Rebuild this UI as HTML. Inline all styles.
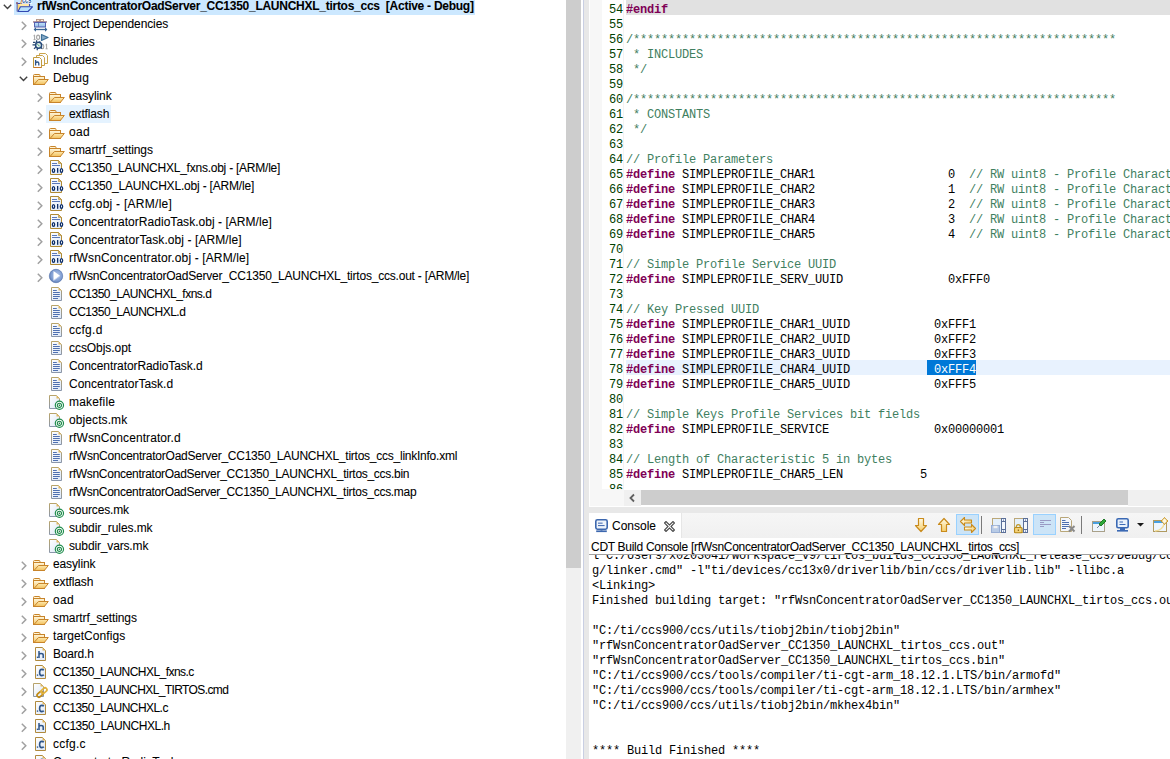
<!DOCTYPE html>
<html><head><meta charset="utf-8"><style>
*{margin:0;padding:0;box-sizing:border-box}
html,body{width:1170px;height:759px;overflow:hidden;background:#fff;position:relative}
body{font-family:"Liberation Sans",sans-serif;}
.abs{position:absolute}
#tree{position:absolute;left:0;top:0;width:566px;height:759px;overflow:hidden;background:#fff}
.row{position:absolute;height:18px;line-height:18px;font-size:12px;color:#000;white-space:pre;-webkit-text-stroke:0.07px #000}
.row .t{position:absolute;top:0}
.hl{position:absolute;height:18px}
.chev{position:absolute}
.ico{position:absolute}
.kw{color:#7f0055;font-weight:bold}
.cm{color:#3f7f5f}
.ln{position:absolute;left:0;width:33px;text-align:right;color:#004000;height:15px;line-height:15px}
.code{position:absolute;left:36px;height:15px;line-height:15px;color:#000}
.con{position:absolute;left:2px;height:15px;line-height:15px;color:#000}
.mono{font-family:"Liberation Mono",monospace;font-size:12px;letter-spacing:-0.2px;white-space:pre}
</style></head>
<body>
<div id="tree"><svg width="0" height="0" style="position:absolute">
<defs>
<linearGradient id="gfold" x1="0" y1="0" x2="0" y2="1"><stop offset="0" stop-color="#fff8e0"/><stop offset="1" stop-color="#f4c460"/></linearGradient>
<linearGradient id="gflap" x1="0" y1="0" x2="0" y2="1"><stop offset="0" stop-color="#feeab0"/><stop offset="1" stop-color="#f2c05c"/></linearGradient>
<linearGradient id="gpage" x1="0" y1="0" x2="1" y2="1"><stop offset="0" stop-color="#ffffff"/><stop offset="1" stop-color="#dce7f6"/></linearGradient>
<linearGradient id="gbord" x1="0" y1="0" x2="0" y2="1"><stop offset="0" stop-color="#b9a46a"/><stop offset="1" stop-color="#8a96aa"/></linearGradient>
<radialGradient id="gout" cx="0.55" cy="0.45" r="0.6"><stop offset="0" stop-color="#b6c9ec"/><stop offset="0.7" stop-color="#7d9bd0"/><stop offset="1" stop-color="#5472aa"/></radialGradient>
<linearGradient id="gbox" x1="0" y1="0" x2="0" y2="1"><stop offset="0" stop-color="#c4e4fb"/><stop offset="1" stop-color="#8fb8e6"/></linearGradient>
</defs>
<symbol id="i-folder" viewBox="0 0 20 20">
 <path d="M2.5,9 L2.5,7.5 Q2.5,6.5 3.5,6.5 L8,6.5 Q9,6.5 9,7.5 L9,8.5" fill="#fff4d4" stroke="#c8842a" stroke-width="1"/>
 <rect x="2.5" y="8.5" width="11" height="8" fill="url(#gfold)" stroke="#c8842a" stroke-width="1"/>
 <path d="M7.5,11.5 L17.3,11.5 L13.3,16.5 L3,16.5 Z" fill="url(#gflap)" stroke="#c8842a" stroke-width="1" stroke-linejoin="round"/>
</symbol>
<symbol id="i-root" viewBox="0 0 20 20">
 <path d="M2.2,15.5 L2.2,7.5 L14.5,7.5 L14.5,10.5" fill="#ffe9a6" stroke="#3f4cae" stroke-width="1.1"/>
 <path d="M2.8,8 L2.8,15 L6,11 Z" fill="#fcd670"/>
 <path d="M1,7 L3,7" stroke="#8a5a70" stroke-width="1.3"/>
 <path d="M5.5,10.8 L17.5,10.8 L13,15.5 L3,15.5 Z" fill="#b8e0fb" stroke="#3148b2" stroke-width="1.1" stroke-linejoin="round"/>
 <rect x="6.6" y="0" width="10.2" height="7.8" fill="#fff"/>
 <path d="M5.5,8 L7.3,2" stroke="#e0a040" stroke-width="1"/>
 <text x="7" y="6.9" font-family="Liberation Sans" font-size="8.5" font-weight="bold" fill="#1f5d9c" textLength="9.3" lengthAdjust="spacingAndGlyphs">ccs</text>
</symbol>
<symbol id="i-deps" viewBox="0 0 20 20">
 <rect x="5.5" y="5.5" width="3" height="2" fill="#fde4c8" stroke="#b49484" stroke-width="0.9"/>
 <rect x="9.5" y="5.5" width="3" height="2" fill="#fff0dc" stroke="#b49484" stroke-width="0.9"/>
 <rect x="2" y="7.2" width="14" height="1.5" fill="#a08290"/>
 <rect x="3.5" y="8.5" width="11" height="4.5" fill="url(#gbox)" stroke="#5560b0" stroke-width="1"/>
 <line x1="7.5" y1="9" x2="7.5" y2="13" stroke="#6070b0" stroke-width="0.8"/>
 <line x1="3.5" y1="15.5" x2="15.5" y2="15.5" stroke="#3a6494" stroke-width="1.3"/>
 <path d="M2.6,15.5 L5,13.3 L5,17.7 Z M16.4,15.5 L14,13.3 L14,17.7 Z" fill="#3a6494"/>
</symbol>
<symbol id="i-bins" viewBox="0 0 20 20">
 <path d="M2.5,3.8 L3.6,3 L3.6,7.6 M2.6,7.6 L4.6,7.6" fill="none" stroke="#a4a4a4" stroke-width="1"/>
 <ellipse cx="7.1" cy="5.3" rx="1.5" ry="2.2" fill="none" stroke="#a4a4a4" stroke-width="1.1"/>
 <path d="M10.5,2.5 L17,5.5 L10.5,8.5 Z" fill="#86aac8" stroke="#3d7098" stroke-width="1.2" stroke-linejoin="round"/>
 <ellipse cx="11.4" cy="14.5" rx="1.4" ry="2.2" fill="none" stroke="#a4a4a4" stroke-width="1.1"/>
 <path d="M14.6,12.8 L15.6,12 L15.6,16.8 M14.6,16.8 L16.6,16.8" fill="none" stroke="#a4a4a4" stroke-width="1"/>
 <path d="M4.6,10.3 L2,10.3 M5.6,8.3 L5.6,10.3 M9.3,9.5 L8.3,10.5 M4.5,12.8 L1.5,12.8 M4.8,15.3 L3,16.8 M6.8,16 L6,18.2 M10,15.5 L11,16.5" stroke="#27496f" stroke-width="1.2"/>
 <circle cx="7.6" cy="13.2" r="3" fill="#e2f0ea" stroke="#24487a" stroke-width="1.5"/>
 <path d="M6.5,12.2 L8.6,14.3" stroke="#3a9a70" stroke-width="1"/>
</symbol>
<symbol id="i-incs" viewBox="0 0 20 20">
 <path d="M8.5,3.5 L14.5,3.5 L16.5,5.5 L16.5,13.5 L8.5,13.5 Z" fill="#fbfcff" stroke="#cba54c" stroke-width="1"/>
 <path d="M5.5,5.5 L11.5,5.5 L13.5,7.5 L13.5,15.5 L5.5,15.5 Z" fill="#fbfcff" stroke="#c9a24a" stroke-width="1"/>
 <path d="M2.5,7.5 L8.5,7.5 L10.5,9.5 L10.5,17.5 L2.5,17.5 Z" fill="#fbfcff" stroke="#c19a3e" stroke-width="1"/>
 <path d="M2.5,17.5 L10.5,17.5" stroke="#c8782a" stroke-width="1"/>
 <path d="M4.6,10 L4.6,15.5 M4.6,12.8 Q5.2,12 6.4,12 Q7.8,12 7.8,13.3 L7.8,15.5" fill="none" stroke="#2d5488" stroke-width="1.3"/>
</symbol>
<symbol id="i-obj" viewBox="0 0 20 20">
 <path d="M3.5,2.5 L11.5,2.5 L14.5,5.5 L14.5,16.5 L3.5,16.5 Z" fill="url(#gpage)" stroke="#b08a34" stroke-width="1"/>
 <path d="M11.5,2.5 L11.5,5.5 L14.5,5.5 Z" fill="#e2bb62" stroke="#b08a34" stroke-width="0.6"/>
 <path d="M5,5.5 L10,5.5 M5,7.5 L13,7.5" stroke="#5a78b8" stroke-width="1"/>
 <ellipse cx="6.5" cy="12.4" rx="1.15" ry="1.85" fill="none" stroke="#0e2f6a" stroke-width="1.3"/>
 <rect x="10" y="10" width="1.3" height="4.8" fill="#0e2f6a"/>
 <ellipse cx="14.5" cy="12.4" rx="1.15" ry="1.85" fill="#fff" stroke="#0e2f6a" stroke-width="1.3"/>
</symbol>
<symbol id="i-out" viewBox="0 0 20 20">
 <circle cx="9" cy="10" r="6.7" fill="url(#gout)" stroke="#5a78b0" stroke-width="0.7"/>
 <path d="M6.5,5 L13,9.8 L6.5,14.6 Z" fill="#fff"/>
 <path d="M6.5,14.6 L13,9.8" stroke="#c8d6f0" stroke-width="0.8"/>
</symbol>
<symbol id="i-doc" viewBox="0 0 20 20">
 <path d="M4.5,3.5 L11.5,3.5 L14.5,6.5 L14.5,16.5 L4.5,16.5 Z" fill="url(#gpage)" stroke="url(#gbord)" stroke-width="1"/>
 <path d="M11.5,3.5 L11.5,6.5 L14.5,6.5 Z" fill="#e2b860"/>
 <path d="M6,6.5 L9.8,6.5 M6,8.5 L12.8,8.5 M6,10.5 L12.8,10.5 M6,12.5 L12.8,12.5 M6,14.5 L11,14.5" stroke="#4f70b0" stroke-width="1"/>
</symbol>
<symbol id="i-mk" viewBox="0 0 20 20">
 <path d="M2.5,3.5 L9.5,3.5 L12.5,6.5 L12.5,16.5 L2.5,16.5 Z" fill="url(#gpage)" stroke="url(#gbord)" stroke-width="1"/>
 <path d="M9.5,3.5 L9.5,6.5 L12.5,6.5 Z" fill="#e2b860"/>
 <circle cx="12.4" cy="13.3" r="4.1" fill="#fff" stroke="#1e8c4c" stroke-width="1.2"/>
 <circle cx="12.4" cy="13.3" r="2.1" fill="#fff" stroke="#1e8c4c" stroke-width="1.1"/>
 <circle cx="12.4" cy="13.3" r="0.8" fill="#1e6a3a"/>
</symbol>
<symbol id="i-hfile" viewBox="0 0 20 20">
 <path d="M4.5,3.5 L11.5,3.5 L14.5,6.5 L14.5,16.5 L4.5,16.5 Z" fill="url(#gpage)" stroke="#b08a3e" stroke-width="1"/>
 <path d="M11.5,3.5 L11.5,6.5 L14.5,6.5 Z" fill="#e2b860"/>
 <rect x="5.8" y="12.6" width="1.4" height="1.4" fill="#2d5488"/>
 <path d="M8,7 L8,14 M8,10.3 Q8.6,9.5 10,9.5 Q12.2,9.5 12.2,11 L12.2,14" fill="none" stroke="#2d5488" stroke-width="1.5"/>
</symbol>
<symbol id="i-cfile" viewBox="0 0 20 20">
 <path d="M4.5,3.5 L11.5,3.5 L14.5,6.5 L14.5,16.5 L4.5,16.5 Z" fill="url(#gpage)" stroke="#b08a3e" stroke-width="1"/>
 <path d="M11.5,3.5 L11.5,6.5 L14.5,6.5 Z" fill="#e2b860"/>
 <rect x="5.8" y="12.4" width="1.4" height="1.4" fill="#2d5488"/>
 <path d="M12.8,8.2 Q12.2,7.4 10.8,7.4 Q8.6,7.4 8.6,10.5 Q8.6,13.6 10.8,13.6 Q12.2,13.6 12.8,12.8" fill="none" stroke="#2d5488" stroke-width="1.6"/>
</symbol>
<symbol id="i-cmd" viewBox="0 0 20 20">
 <path d="M2.5,3.5 L9.5,3.5 L12.5,6.5 L12.5,16.5 L2.5,16.5 Z" fill="url(#gpage)" stroke="url(#gbord)" stroke-width="1"/>
 <path d="M9.5,3.5 L9.5,6.5 L12.5,6.5 Z" fill="#e2b860"/>
 <g transform="rotate(-42 11 12.5)">
  <rect x="5" y="10.6" width="6.5" height="3.8" rx="1.9" fill="none" stroke="#c08a14" stroke-width="1.7"/>
  <rect x="10.5" y="10.6" width="6.5" height="3.8" rx="1.9" fill="none" stroke="#e2b23c" stroke-width="1.7"/>
 </g>
</symbol>
</svg><div class="abs" style="left:14px;top:0px;width:461px;height:15px;background:#cce8ff"></div><svg class="abs" style="left:3px;top:4px" width="10" height="7" viewBox="0 0 10 7"><polyline points="0.8,0.8 4.5,4.5 8.2,0.8" fill="none" stroke="#404040" stroke-width="1.4"/></svg><svg class="abs" style="left:15px;top:-4px" width="20" height="20" viewBox="0 0 20 20"><use href="#i-root"/></svg><div class="row" style="left:37px;top:-3px;font-weight:bold;letter-spacing:-0.265px">rfWsnConcentratorOadServer_CC1350_LAUNCHXL_tirtos_ccs  [Active - Debug]</div><svg class="abs" style="left:21px;top:21px" width="7" height="10" viewBox="0 0 7 10"><polyline points="0.8,0.8 4.8,4.8 0.8,8.8" fill="none" stroke="#a0a0a0" stroke-width="1.5"/></svg><svg class="abs" style="left:31px;top:14px" width="20" height="20" viewBox="0 0 20 20"><use href="#i-deps"/></svg><div class="row" style="left:53px;top:15px;letter-spacing:-0.115px">Project Dependencies</div><svg class="abs" style="left:21px;top:39px" width="7" height="10" viewBox="0 0 7 10"><polyline points="0.8,0.8 4.8,4.8 0.8,8.8" fill="none" stroke="#a0a0a0" stroke-width="1.5"/></svg><svg class="abs" style="left:31px;top:32px" width="20" height="20" viewBox="0 0 20 20"><use href="#i-bins"/></svg><div class="row" style="left:53px;top:33px;letter-spacing:-0.240px">Binaries</div><svg class="abs" style="left:21px;top:57px" width="7" height="10" viewBox="0 0 7 10"><polyline points="0.8,0.8 4.8,4.8 0.8,8.8" fill="none" stroke="#a0a0a0" stroke-width="1.5"/></svg><svg class="abs" style="left:31px;top:50px" width="20" height="20" viewBox="0 0 20 20"><use href="#i-incs"/></svg><div class="row" style="left:53px;top:51px;letter-spacing:-0.003px">Includes</div><svg class="abs" style="left:19px;top:76px" width="10" height="7" viewBox="0 0 10 7"><polyline points="0.8,0.8 4.5,4.5 8.2,0.8" fill="none" stroke="#404040" stroke-width="1.4"/></svg><svg class="abs" style="left:31px;top:68px" width="20" height="20" viewBox="0 0 20 20"><use href="#i-folder"/></svg><div class="row" style="left:53px;top:69px;letter-spacing:0.111px">Debug</div><svg class="abs" style="left:37px;top:93px" width="7" height="10" viewBox="0 0 7 10"><polyline points="0.8,0.8 4.8,4.8 0.8,8.8" fill="none" stroke="#a0a0a0" stroke-width="1.5"/></svg><svg class="abs" style="left:47px;top:86px" width="20" height="20" viewBox="0 0 20 20"><use href="#i-folder"/></svg><div class="row" style="left:69px;top:87px;letter-spacing:-0.097px">easylink</div><div class="abs" style="left:46px;top:105px;width:65px;height:18px;background:#e5f3ff"></div><svg class="abs" style="left:37px;top:111px" width="7" height="10" viewBox="0 0 7 10"><polyline points="0.8,0.8 4.8,4.8 0.8,8.8" fill="none" stroke="#a0a0a0" stroke-width="1.5"/></svg><svg class="abs" style="left:47px;top:104px" width="20" height="20" viewBox="0 0 20 20"><use href="#i-folder"/></svg><div class="row" style="left:69px;top:105px;letter-spacing:-0.146px">extflash</div><svg class="abs" style="left:37px;top:129px" width="7" height="10" viewBox="0 0 7 10"><polyline points="0.8,0.8 4.8,4.8 0.8,8.8" fill="none" stroke="#a0a0a0" stroke-width="1.5"/></svg><svg class="abs" style="left:47px;top:122px" width="20" height="20" viewBox="0 0 20 20"><use href="#i-folder"/></svg><div class="row" style="left:69px;top:123px;letter-spacing:0.324px">oad</div><svg class="abs" style="left:37px;top:147px" width="7" height="10" viewBox="0 0 7 10"><polyline points="0.8,0.8 4.8,4.8 0.8,8.8" fill="none" stroke="#a0a0a0" stroke-width="1.5"/></svg><svg class="abs" style="left:47px;top:140px" width="20" height="20" viewBox="0 0 20 20"><use href="#i-folder"/></svg><div class="row" style="left:69px;top:141px;letter-spacing:-0.094px">smartrf_settings</div><svg class="abs" style="left:37px;top:165px" width="7" height="10" viewBox="0 0 7 10"><polyline points="0.8,0.8 4.8,4.8 0.8,8.8" fill="none" stroke="#a0a0a0" stroke-width="1.5"/></svg><svg class="abs" style="left:47px;top:158px" width="20" height="20" viewBox="0 0 20 20"><use href="#i-obj"/></svg><div class="row" style="left:69px;top:159px;letter-spacing:-0.238px">CC1350_LAUNCHXL_fxns.obj - [ARM/le]</div><svg class="abs" style="left:37px;top:183px" width="7" height="10" viewBox="0 0 7 10"><polyline points="0.8,0.8 4.8,4.8 0.8,8.8" fill="none" stroke="#a0a0a0" stroke-width="1.5"/></svg><svg class="abs" style="left:47px;top:176px" width="20" height="20" viewBox="0 0 20 20"><use href="#i-obj"/></svg><div class="row" style="left:69px;top:177px;letter-spacing:-0.187px">CC1350_LAUNCHXL.obj - [ARM/le]</div><svg class="abs" style="left:37px;top:201px" width="7" height="10" viewBox="0 0 7 10"><polyline points="0.8,0.8 4.8,4.8 0.8,8.8" fill="none" stroke="#a0a0a0" stroke-width="1.5"/></svg><svg class="abs" style="left:47px;top:194px" width="20" height="20" viewBox="0 0 20 20"><use href="#i-obj"/></svg><div class="row" style="left:69px;top:195px;letter-spacing:0.269px">ccfg.obj - [ARM/le]</div><svg class="abs" style="left:37px;top:219px" width="7" height="10" viewBox="0 0 7 10"><polyline points="0.8,0.8 4.8,4.8 0.8,8.8" fill="none" stroke="#a0a0a0" stroke-width="1.5"/></svg><svg class="abs" style="left:47px;top:212px" width="20" height="20" viewBox="0 0 20 20"><use href="#i-obj"/></svg><div class="row" style="left:69px;top:213px;letter-spacing:0.037px">ConcentratorRadioTask.obj - [ARM/le]</div><svg class="abs" style="left:37px;top:237px" width="7" height="10" viewBox="0 0 7 10"><polyline points="0.8,0.8 4.8,4.8 0.8,8.8" fill="none" stroke="#a0a0a0" stroke-width="1.5"/></svg><svg class="abs" style="left:47px;top:230px" width="20" height="20" viewBox="0 0 20 20"><use href="#i-obj"/></svg><div class="row" style="left:69px;top:231px;letter-spacing:0.084px">ConcentratorTask.obj - [ARM/le]</div><svg class="abs" style="left:37px;top:255px" width="7" height="10" viewBox="0 0 7 10"><polyline points="0.8,0.8 4.8,4.8 0.8,8.8" fill="none" stroke="#a0a0a0" stroke-width="1.5"/></svg><svg class="abs" style="left:47px;top:248px" width="20" height="20" viewBox="0 0 20 20"><use href="#i-obj"/></svg><div class="row" style="left:69px;top:249px;letter-spacing:0.133px">rfWsnConcentrator.obj - [ARM/le]</div><svg class="abs" style="left:37px;top:273px" width="7" height="10" viewBox="0 0 7 10"><polyline points="0.8,0.8 4.8,4.8 0.8,8.8" fill="none" stroke="#a0a0a0" stroke-width="1.5"/></svg><svg class="abs" style="left:47px;top:266px" width="20" height="20" viewBox="0 0 20 20"><use href="#i-out"/></svg><div class="row" style="left:69px;top:267px;letter-spacing:-0.206px">rfWsnConcentratorOadServer_CC1350_LAUNCHXL_tirtos_ccs.out - [ARM/le]</div><svg class="abs" style="left:47px;top:284px" width="20" height="20" viewBox="0 0 20 20"><use href="#i-doc"/></svg><div class="row" style="left:69px;top:285px;letter-spacing:-0.503px">CC1350_LAUNCHXL_fxns.d</div><svg class="abs" style="left:47px;top:302px" width="20" height="20" viewBox="0 0 20 20"><use href="#i-doc"/></svg><div class="row" style="left:69px;top:303px;letter-spacing:-0.492px">CC1350_LAUNCHXL.d</div><svg class="abs" style="left:47px;top:320px" width="20" height="20" viewBox="0 0 20 20"><use href="#i-doc"/></svg><div class="row" style="left:69px;top:321px;letter-spacing:0.259px">ccfg.d</div><svg class="abs" style="left:47px;top:338px" width="20" height="20" viewBox="0 0 20 20"><use href="#i-doc"/></svg><div class="row" style="left:69px;top:339px;letter-spacing:-0.053px">ccsObjs.opt</div><svg class="abs" style="left:47px;top:356px" width="20" height="20" viewBox="0 0 20 20"><use href="#i-doc"/></svg><div class="row" style="left:69px;top:357px;letter-spacing:-0.081px">ConcentratorRadioTask.d</div><svg class="abs" style="left:47px;top:374px" width="20" height="20" viewBox="0 0 20 20"><use href="#i-doc"/></svg><div class="row" style="left:69px;top:375px;letter-spacing:0.004px">ConcentratorTask.d</div><svg class="abs" style="left:47px;top:392px" width="20" height="20" viewBox="0 0 20 20"><use href="#i-mk"/></svg><div class="row" style="left:69px;top:393px;letter-spacing:0.182px">makefile</div><svg class="abs" style="left:47px;top:410px" width="20" height="20" viewBox="0 0 20 20"><use href="#i-mk"/></svg><div class="row" style="left:69px;top:411px;letter-spacing:0.095px">objects.mk</div><svg class="abs" style="left:47px;top:428px" width="20" height="20" viewBox="0 0 20 20"><use href="#i-doc"/></svg><div class="row" style="left:69px;top:429px;letter-spacing:0.087px">rfWsnConcentrator.d</div><svg class="abs" style="left:47px;top:446px" width="20" height="20" viewBox="0 0 20 20"><use href="#i-doc"/></svg><div class="row" style="left:69px;top:447px;letter-spacing:-0.244px">rfWsnConcentratorOadServer_CC1350_LAUNCHXL_tirtos_ccs_linkInfo.xml</div><svg class="abs" style="left:47px;top:464px" width="20" height="20" viewBox="0 0 20 20"><use href="#i-doc"/></svg><div class="row" style="left:69px;top:465px;letter-spacing:-0.292px">rfWsnConcentratorOadServer_CC1350_LAUNCHXL_tirtos_ccs.bin</div><svg class="abs" style="left:47px;top:482px" width="20" height="20" viewBox="0 0 20 20"><use href="#i-doc"/></svg><div class="row" style="left:69px;top:483px;letter-spacing:-0.295px">rfWsnConcentratorOadServer_CC1350_LAUNCHXL_tirtos_ccs.map</div><svg class="abs" style="left:47px;top:500px" width="20" height="20" viewBox="0 0 20 20"><use href="#i-mk"/></svg><div class="row" style="left:69px;top:501px;letter-spacing:-0.141px">sources.mk</div><svg class="abs" style="left:47px;top:518px" width="20" height="20" viewBox="0 0 20 20"><use href="#i-mk"/></svg><div class="row" style="left:69px;top:519px;letter-spacing:-0.077px">subdir_rules.mk</div><svg class="abs" style="left:47px;top:536px" width="20" height="20" viewBox="0 0 20 20"><use href="#i-mk"/></svg><div class="row" style="left:69px;top:537px;letter-spacing:-0.151px">subdir_vars.mk</div><svg class="abs" style="left:21px;top:561px" width="7" height="10" viewBox="0 0 7 10"><polyline points="0.8,0.8 4.8,4.8 0.8,8.8" fill="none" stroke="#a0a0a0" stroke-width="1.5"/></svg><svg class="abs" style="left:31px;top:554px" width="20" height="20" viewBox="0 0 20 20"><use href="#i-folder"/></svg><div class="row" style="left:53px;top:555px;letter-spacing:-0.126px">easylink</div><svg class="abs" style="left:21px;top:579px" width="7" height="10" viewBox="0 0 7 10"><polyline points="0.8,0.8 4.8,4.8 0.8,8.8" fill="none" stroke="#a0a0a0" stroke-width="1.5"/></svg><svg class="abs" style="left:31px;top:572px" width="20" height="20" viewBox="0 0 20 20"><use href="#i-folder"/></svg><div class="row" style="left:53px;top:573px;letter-spacing:-0.146px">extflash</div><svg class="abs" style="left:21px;top:597px" width="7" height="10" viewBox="0 0 7 10"><polyline points="0.8,0.8 4.8,4.8 0.8,8.8" fill="none" stroke="#a0a0a0" stroke-width="1.5"/></svg><svg class="abs" style="left:31px;top:590px" width="20" height="20" viewBox="0 0 20 20"><use href="#i-folder"/></svg><div class="row" style="left:53px;top:591px;letter-spacing:0.274px">oad</div><svg class="abs" style="left:21px;top:615px" width="7" height="10" viewBox="0 0 7 10"><polyline points="0.8,0.8 4.8,4.8 0.8,8.8" fill="none" stroke="#a0a0a0" stroke-width="1.5"/></svg><svg class="abs" style="left:31px;top:608px" width="20" height="20" viewBox="0 0 20 20"><use href="#i-folder"/></svg><div class="row" style="left:53px;top:609px;letter-spacing:-0.094px">smartrf_settings</div><svg class="abs" style="left:21px;top:633px" width="7" height="10" viewBox="0 0 7 10"><polyline points="0.8,0.8 4.8,4.8 0.8,8.8" fill="none" stroke="#a0a0a0" stroke-width="1.5"/></svg><svg class="abs" style="left:31px;top:626px" width="20" height="20" viewBox="0 0 20 20"><use href="#i-folder"/></svg><div class="row" style="left:53px;top:627px;letter-spacing:0.072px">targetConfigs</div><svg class="abs" style="left:21px;top:651px" width="7" height="10" viewBox="0 0 7 10"><polyline points="0.8,0.8 4.8,4.8 0.8,8.8" fill="none" stroke="#a0a0a0" stroke-width="1.5"/></svg><svg class="abs" style="left:31px;top:644px" width="20" height="20" viewBox="0 0 20 20"><use href="#i-hfile"/></svg><div class="row" style="left:53px;top:645px;letter-spacing:-0.186px">Board.h</div><svg class="abs" style="left:21px;top:669px" width="7" height="10" viewBox="0 0 7 10"><polyline points="0.8,0.8 4.8,4.8 0.8,8.8" fill="none" stroke="#a0a0a0" stroke-width="1.5"/></svg><svg class="abs" style="left:31px;top:662px" width="20" height="20" viewBox="0 0 20 20"><use href="#i-cfile"/></svg><div class="row" style="left:53px;top:663px;letter-spacing:-0.545px">CC1350_LAUNCHXL_fxns.c</div><svg class="abs" style="left:21px;top:687px" width="7" height="10" viewBox="0 0 7 10"><polyline points="0.8,0.8 4.8,4.8 0.8,8.8" fill="none" stroke="#a0a0a0" stroke-width="1.5"/></svg><svg class="abs" style="left:31px;top:680px" width="20" height="20" viewBox="0 0 20 20"><use href="#i-cmd"/></svg><div class="row" style="left:53px;top:681px;letter-spacing:-0.601px">CC1350_LAUNCHXL_TIRTOS.cmd</div><svg class="abs" style="left:21px;top:705px" width="7" height="10" viewBox="0 0 7 10"><polyline points="0.8,0.8 4.8,4.8 0.8,8.8" fill="none" stroke="#a0a0a0" stroke-width="1.5"/></svg><svg class="abs" style="left:31px;top:698px" width="20" height="20" viewBox="0 0 20 20"><use href="#i-cfile"/></svg><div class="row" style="left:53px;top:699px;letter-spacing:-0.541px">CC1350_LAUNCHXL.c</div><svg class="abs" style="left:21px;top:723px" width="7" height="10" viewBox="0 0 7 10"><polyline points="0.8,0.8 4.8,4.8 0.8,8.8" fill="none" stroke="#a0a0a0" stroke-width="1.5"/></svg><svg class="abs" style="left:31px;top:716px" width="20" height="20" viewBox="0 0 20 20"><use href="#i-hfile"/></svg><div class="row" style="left:53px;top:717px;letter-spacing:-0.473px">CC1350_LAUNCHXL.h</div><svg class="abs" style="left:21px;top:741px" width="7" height="10" viewBox="0 0 7 10"><polyline points="0.8,0.8 4.8,4.8 0.8,8.8" fill="none" stroke="#a0a0a0" stroke-width="1.5"/></svg><svg class="abs" style="left:31px;top:734px" width="20" height="20" viewBox="0 0 20 20"><use href="#i-cfile"/></svg><div class="row" style="left:53px;top:735px;letter-spacing:0.243px">ccfg.c</div><svg class="abs" style="left:21px;top:759px" width="7" height="10" viewBox="0 0 7 10"><polyline points="0.8,0.8 4.8,4.8 0.8,8.8" fill="none" stroke="#a0a0a0" stroke-width="1.5"/></svg><svg class="abs" style="left:31px;top:752px" width="20" height="20" viewBox="0 0 20 20"><use href="#i-cfile"/></svg><div class="row" style="left:53px;top:753px;letter-spacing:-0.081px">ConcentratorRadioTask.c</div></div><div class="abs" style="left:566px;top:0;width:15px;height:759px;background:#f0f0f0"></div><div class="abs" style="left:566px;top:0;width:15px;height:568px;background:#cdcdcd"></div><div class="abs" style="left:581px;top:0;width:2px;height:759px;background:#fff"></div><div class="abs" style="left:583px;top:0;width:1px;height:759px;background:#c9cfe3"></div><div class="abs" style="left:584px;top:0;width:586px;height:759px;background:#e8e8e8"></div><div class="abs" style="left:589px;top:0;width:581px;height:507px;background:#fff"></div><div class="abs" style="left:590px;top:0;width:12px;height:506px;background:#f7f7f7"></div><div class="abs" style="left:623px;top:0;width:1px;height:489px;background:#f3f3f3"></div><div class="abs" style="left:626px;top:0px;width:544px;height:15px;background:#e1e1e1"></div><div class="abs" style="left:626px;top:360px;width:544px;height:15px;background:#e8f2fe"></div><div class="abs" style="left:927px;top:360px;width:49px;height:15px;background:#0078d7"></div><div class="abs" style="left:590px;top:0;width:580px;height:489px;overflow:hidden"><div class="mono ln" style="top:3px">54</div><div class="mono code" style="top:3px"><span class="kw">#endif</span></div><div class="mono ln" style="top:18px">55</div><div class="mono code" style="top:18px"></div><div class="mono ln" style="top:33px">56</div><div class="mono code" style="top:33px"><span class="cm">/*********************************************************************</span></div><div class="mono ln" style="top:48px">57</div><div class="mono code" style="top:48px"><span class="cm"> * INCLUDES</span></div><div class="mono ln" style="top:63px">58</div><div class="mono code" style="top:63px"><span class="cm"> */</span></div><div class="mono ln" style="top:78px">59</div><div class="mono code" style="top:78px"></div><div class="mono ln" style="top:93px">60</div><div class="mono code" style="top:93px"><span class="cm">/*********************************************************************</span></div><div class="mono ln" style="top:108px">61</div><div class="mono code" style="top:108px"><span class="cm"> * CONSTANTS</span></div><div class="mono ln" style="top:123px">62</div><div class="mono code" style="top:123px"><span class="cm"> */</span></div><div class="mono ln" style="top:138px">63</div><div class="mono code" style="top:138px"></div><div class="mono ln" style="top:153px">64</div><div class="mono code" style="top:153px"><span class="cm">// Profile Parameters</span></div><div class="mono ln" style="top:168px">65</div><div class="mono code" style="top:168px"><span class="kw">#define</span> SIMPLEPROFILE_CHAR1                   0  <span class="cm">// RW uint8 - Profile Characteristic 1 value</span></div><div class="mono ln" style="top:183px">66</div><div class="mono code" style="top:183px"><span class="kw">#define</span> SIMPLEPROFILE_CHAR2                   1  <span class="cm">// RW uint8 - Profile Characteristic 2 value</span></div><div class="mono ln" style="top:198px">67</div><div class="mono code" style="top:198px"><span class="kw">#define</span> SIMPLEPROFILE_CHAR3                   2  <span class="cm">// RW uint8 - Profile Characteristic 3 value</span></div><div class="mono ln" style="top:213px">68</div><div class="mono code" style="top:213px"><span class="kw">#define</span> SIMPLEPROFILE_CHAR4                   3  <span class="cm">// RW uint8 - Profile Characteristic 4 value</span></div><div class="mono ln" style="top:228px">69</div><div class="mono code" style="top:228px"><span class="kw">#define</span> SIMPLEPROFILE_CHAR5                   4  <span class="cm">// RW uint8 - Profile Characteristic 5 value</span></div><div class="mono ln" style="top:243px">70</div><div class="mono code" style="top:243px"></div><div class="mono ln" style="top:258px">71</div><div class="mono code" style="top:258px"><span class="cm">// Simple Profile Service UUID</span></div><div class="mono ln" style="top:273px">72</div><div class="mono code" style="top:273px"><span class="kw">#define</span> SIMPLEPROFILE_SERV_UUID               0xFFF0</div><div class="mono ln" style="top:288px">73</div><div class="mono code" style="top:288px"></div><div class="mono ln" style="top:303px">74</div><div class="mono code" style="top:303px"><span class="cm">// Key Pressed UUID</span></div><div class="mono ln" style="top:318px">75</div><div class="mono code" style="top:318px"><span class="kw">#define</span> SIMPLEPROFILE_CHAR1_UUID            0xFFF1</div><div class="mono ln" style="top:333px">76</div><div class="mono code" style="top:333px"><span class="kw">#define</span> SIMPLEPROFILE_CHAR2_UUID            0xFFF2</div><div class="mono ln" style="top:348px">77</div><div class="mono code" style="top:348px"><span class="kw">#define</span> SIMPLEPROFILE_CHAR3_UUID            0xFFF3</div><div class="mono ln" style="top:363px">78</div><div class="mono code" style="top:363px"><span class="kw">#define</span> SIMPLEPROFILE_CHAR4_UUID           <span style="color:#fff"> 0xFFF4</span></div><div class="mono ln" style="top:378px">79</div><div class="mono code" style="top:378px"><span class="kw">#define</span> SIMPLEPROFILE_CHAR5_UUID            0xFFF5</div><div class="mono ln" style="top:393px">80</div><div class="mono code" style="top:393px"></div><div class="mono ln" style="top:408px">81</div><div class="mono code" style="top:408px"><span class="cm">// Simple Keys Profile Services bit fields</span></div><div class="mono ln" style="top:423px">82</div><div class="mono code" style="top:423px"><span class="kw">#define</span> SIMPLEPROFILE_SERVICE               0x00000001</div><div class="mono ln" style="top:438px">83</div><div class="mono code" style="top:438px"></div><div class="mono ln" style="top:453px">84</div><div class="mono code" style="top:453px"><span class="cm">// Length of Characteristic 5 in bytes</span></div><div class="mono ln" style="top:468px">85</div><div class="mono code" style="top:468px"><span class="kw">#define</span> SIMPLEPROFILE_CHAR5_LEN           5</div><div class="mono ln" style="top:483px">86</div><div class="mono code" style="top:483px"></div></div><div class="abs" style="left:590px;top:489px;width:34px;height:17px;background:#f7f7f7"></div><div class="abs" style="left:624px;top:490px;width:17px;height:16px;background:#f0f0f0"></div><svg class="abs" style="left:628px;top:493px" width="10" height="10" viewBox="0 0 10 10"><polyline points="6,1.5 2.5,5 6,8.5" fill="none" stroke="#606060" stroke-width="1.8"/></svg><div class="abs" style="left:641px;top:490px;width:487px;height:15px;background:#cdcdcd"></div><div class="abs" style="left:1128px;top:490px;width:42px;height:16px;background:#f0f0f0"></div><div class="abs" style="left:589px;top:513px;width:581px;height:246px;background:#fff"></div><div class="abs" style="left:681px;top:513px;width:489px;height:25px;background:linear-gradient(#f6f6f6,#f0f0f0)"></div><div class="abs" style="left:681px;top:513px;width:1px;height:25px;background:#e6e6e6"></div><svg class="abs" style="left:594px;top:518px" width="16" height="16" viewBox="0 0 16 16"><rect x="1.8" y="1.8" width="11.4" height="9.4" rx="1.6" fill="#eef4fb" stroke="#3c67ae" stroke-width="1.6"/><rect x="4" y="4.6" width="4.6" height="1.1" fill="#4a70b4"/><rect x="4" y="7" width="6.6" height="1.1" fill="#4a70b4"/><rect x="6.5" y="11" width="2" height="1.6" fill="#3c67ae"/><rect x="2.2" y="12.4" width="10.6" height="1.7" fill="#3c67ae"/></svg><div class="row" style="left:612px;top:517px;font-size:12px;letter-spacing:0px">Console</div><svg class="abs" style="left:664px;top:521px" width="11" height="11" viewBox="0 0 11 11"><path d="M0.5,2 L2,0.5 L5.5,4 L9,0.5 L10.5,2 L7,5.5 L10.5,9 L9,10.5 L5.5,7 L2,10.5 L0.5,9 L4,5.5 Z" fill="#fff" stroke="#484848" stroke-width="1.1"/></svg><div class="row" style="left:591px;top:538px;letter-spacing:-0.291px">CDT Build Console [rfWsnConcentratorOadServer_CC1350_LAUNCHXL_tirtos_ccs]</div><div class="abs" style="left:589px;top:554px;width:581px;height:1px;background:#a0a0a0"></div><div class="abs" style="left:590px;top:555px;width:580px;height:204px;overflow:hidden"><div class="mono con" style="top:-6px">l&quot;C:/Users/x0203041/workspace_v9/tirtos_builds_CC1350_LAUNCHXL_release_ccs/Debug/co</div><div class="mono con" style="top:9px">g/linker.cmd&quot; -l&quot;ti/devices/cc13x0/driverlib/bin/ccs/driverlib.lib&quot; -llibc.a</div><div class="mono con" style="top:24px">&lt;Linking&gt;</div><div class="mono con" style="top:39px">Finished building target: &quot;rfWsnConcentratorOadServer_CC1350_LAUNCHXL_tirtos_ccs.out&quot;</div><div class="mono con" style="top:54px"></div><div class="mono con" style="top:69px">&quot;C:/ti/ccs900/ccs/utils/tiobj2bin/tiobj2bin&quot;</div><div class="mono con" style="top:84px">&quot;rfWsnConcentratorOadServer_CC1350_LAUNCHXL_tirtos_ccs.out&quot;</div><div class="mono con" style="top:99px">&quot;rfWsnConcentratorOadServer_CC1350_LAUNCHXL_tirtos_ccs.bin&quot;</div><div class="mono con" style="top:114px">&quot;C:/ti/ccs900/ccs/tools/compiler/ti-cgt-arm_18.12.1.LTS/bin/armofd&quot;</div><div class="mono con" style="top:129px">&quot;C:/ti/ccs900/ccs/tools/compiler/ti-cgt-arm_18.12.1.LTS/bin/armhex&quot;</div><div class="mono con" style="top:144px">&quot;C:/ti/ccs900/ccs/utils/tiobj2bin/mkhex4bin&quot;</div><div class="mono con" style="top:159px"></div><div class="mono con" style="top:174px"></div><div class="mono con" style="top:189px">**** Build Finished ****</div></div>
<svg class="abs" style="left:900px;top:512px" width="270" height="26" viewBox="900 512 270 26">
<defs>
<linearGradient id="garr" x1="0" y1="0" x2="0" y2="1"><stop offset="0" stop-color="#fffbe6"/><stop offset="1" stop-color="#f6cd6a"/></linearGradient>
<linearGradient id="garrh" x1="0" y1="0" x2="1" y2="0"><stop offset="0" stop-color="#fffbe6"/><stop offset="1" stop-color="#f6d37a"/></linearGradient>
</defs>
<!-- down arrow -->
<path d="M918.5,518.5 L923.5,518.5 L923.5,525.5 L926.5,525.5 L921,531.5 L915.5,525.5 L918.5,525.5 Z" fill="url(#garr)" stroke="#c98b1c" stroke-width="1.2" stroke-linejoin="round"/>
<!-- up arrow -->
<path d="M941.5,531.5 L946.5,531.5 L946.5,524.5 L949.5,524.5 L944,518.5 L938.5,524.5 L941.5,524.5 Z" fill="url(#garr)" stroke="#c98b1c" stroke-width="1.2" stroke-linejoin="round"/>
<!-- toggle button 1 -->
<rect x="956.5" y="514.5" width="22" height="20" fill="#cce4f7" stroke="#99d1ff" stroke-width="1"/>
<path d="M960.5,521.5 L964.5,517.5 L964.5,520 L971.5,520 L971.5,523 L964.5,523 L964.5,525.5 Z" fill="url(#garrh)" stroke="#c98b1c" stroke-width="1.1" stroke-linejoin="round"/>
<path d="M975.5,528.5 L971.5,524.5 L971.5,527 L964.5,527 L964.5,530 L971.5,530 L971.5,532.5 Z" fill="url(#garrh)" stroke="#c98b1c" stroke-width="1.1" stroke-linejoin="round"/>
<!-- separator -->
<rect x="981" y="516" width="1" height="18" fill="#7a7a7a"/>
<!-- icon A: window + floppy -->
<rect x="992.5" y="518.5" width="13" height="14" fill="#e4f0fb" stroke="#bca878" stroke-width="1"/>
<rect x="1001.5" y="518.5" width="4" height="14" fill="#f4f8fc" stroke="#5b6f98" stroke-width="1"/>
<path d="M1001.5,521.5 L1005.5,521.5 M1001.5,529.5 L1005.5,529.5" stroke="#5b6f98" stroke-width="1"/>
<rect x="1003" y="519.6" width="1" height="1" fill="#3a5a98"/><rect x="1003" y="530.6" width="1" height="1" fill="#3a5a98"/>
<rect x="991.5" y="525.5" width="8" height="7" fill="#b8cbe6" stroke="#98aed4" stroke-width="1"/>
<rect x="993.5" y="525.8" width="4" height="2.4" fill="#f2f2f2"/>
<!-- icon B: window + lock -->
<rect x="1014.5" y="518.5" width="13" height="14" fill="#e4f0fb" stroke="#bca878" stroke-width="1"/>
<rect x="1023.5" y="518.5" width="4" height="14" fill="#f4f8fc" stroke="#5b6f98" stroke-width="1"/>
<path d="M1023.5,521.5 L1027.5,521.5 M1023.5,529.5 L1027.5,529.5" stroke="#5b6f98" stroke-width="1"/>
<rect x="1025" y="519.6" width="1" height="1" fill="#3a5a98"/><rect x="1025" y="530.6" width="1" height="1" fill="#3a5a98"/>
<path d="M1016.3,528 L1016.3,526.8 Q1016.3,524.6 1018.3,524.6 Q1020.3,524.6 1020.3,526.8 L1020.3,528" fill="none" stroke="#c39a2a" stroke-width="1.3"/>
<rect x="1014.5" y="527.5" width="7.6" height="5.2" rx="1" fill="#f4d27a" stroke="#b88a1a" stroke-width="1.1"/>
<rect x="1017.8" y="529.5" width="1" height="1.5" fill="#7a5a10"/>
<!-- toggle button 2 -->
<rect x="1033.5" y="514.5" width="22" height="20" fill="#cce4f7" stroke="#99d1ff" stroke-width="1"/>
<path d="M1040,520.5 L1051,520.5 M1040,522.5 L1044,522.5 M1040,524.5 L1051,524.5 M1040,526.5 L1044,526.5" stroke="#9a9ac4" stroke-width="1"/>
<!-- icon C: clear console -->
<path d="M1060.5,517.5 L1068.5,517.5 L1071.5,520.5 L1071.5,531.5 L1060.5,531.5 Z" fill="#f4f7fc" stroke="#b9a779" stroke-width="1"/>
<path d="M1062,520.5 L1065.5,520.5 M1062,522.5 L1069,522.5 M1062,524.5 L1069,524.5 M1062,526.5 L1069,526.5 M1062,528.5 L1066,528.5" stroke="#4d6fb0" stroke-width="1"/>
<path d="M1069,526 L1074.5,531.5 M1074.5,526 L1069,531.5" stroke="#8a8a8a" stroke-width="2"/>
<!-- separator -->
<rect x="1081" y="516" width="1" height="18" fill="#7a7a7a"/>
<!-- pin icon -->
<rect x="1092.5" y="521.5" width="12" height="10" fill="#eef6fd" stroke="#a9a089" stroke-width="1"/>
<rect x="1093" y="522" width="11" height="2" fill="#4aa0e0"/>
<path d="M1097,528 L1100,525" stroke="#5a6a80" stroke-width="0.8"/>
<path d="M1099,524 L1104,519 L1106,521 L1101,526 Z" fill="#2fa838" stroke="#1f7a28" stroke-width="1"/>
<!-- monitor icon -->
<rect x="1116.8" y="518.8" width="11.4" height="9" rx="1.5" fill="#eaf2fb" stroke="#3b69b4" stroke-width="1.6"/>
<path d="M1119.5,522 L1123,522 M1119.5,524.5 L1125.5,524.5" stroke="#3b69b4" stroke-width="1"/>
<rect x="1120" y="528" width="5" height="2" fill="#3b69b4"/>
<rect x="1117" y="530" width="11" height="1.6" fill="#3b69b4"/>
<!-- dropdown -->
<path d="M1137,523 L1144,523 L1140.5,526.5 Z" fill="#1a1a1a"/>
<!-- new console -->
<rect x="1153.5" y="520.5" width="13" height="11" fill="#eef6fd" stroke="#b09a60" stroke-width="1"/>
<rect x="1154" y="521" width="12" height="2" fill="#4aa0e0"/>
<path d="M1155,531 Q1163,530 1164,524" fill="none" stroke="#f2dc98" stroke-width="1.5"/>
<path d="M1164.5,517.5 L1166,519.5 L1168,521 L1166,522.5 L1164.5,524.5 L1163,522.5 L1161,521 L1163,519.5 Z" fill="#fff8e0" stroke="#c8941e" stroke-width="1"/>
</svg>

</body></html>
